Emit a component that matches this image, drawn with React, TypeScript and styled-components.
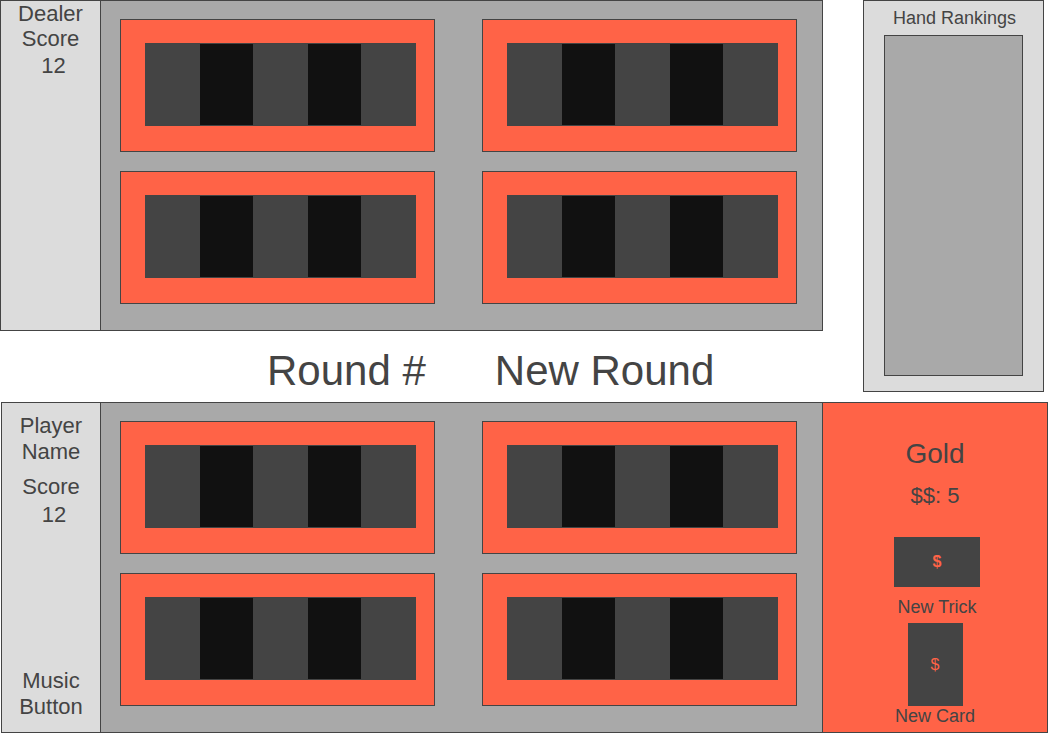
import React from "react";
import styled, { createGlobalStyle } from "styled-components";

const GlobalStyle = createGlobalStyle`
  html, body { margin: 0; padding: 0; background: #ffffff; }
  body { font-family: "Liberation Sans", Arial, sans-serif; color: #444444; }
  * { box-sizing: border-box; }
`;

const Page = styled.div`
  width: 1058px;
  height: 741px;
  overflow: hidden;
  display: flex;
  flex-direction: column;
`;

const TopArea = styled.div`
  display: flex;
  align-items: flex-start;
`;

const LeftColumn = styled.div`
  display: flex;
  flex-direction: column;
  width: 823px;
`;

const Table = styled.section<{ $width: number; $offset?: number }>`
  display: flex;
  width: ${(p) => p.$width}px;
  height: 331px;
  margin-left: ${(p) => p.$offset ?? 0}px;
  border: 1px solid #444444;
  flex-shrink: 0;
`;

const SidePanel = styled.div<{ $width: number; $padTop: number }>`
  width: ${(p) => p.$width}px;
  flex-shrink: 0;
  background: gainsboro;
  border-right: 1px solid #444444;
  display: flex;
  flex-direction: column;
  align-items: center;
  text-align: center;
  padding: ${(p) => p.$padTop}px 0 12px;
  font-size: 22px;
`;

const PanelTitle = styled.div<{ $lh: number }>`
  line-height: ${(p) => p.$lh}px;
  width: 80px;
`;

const PanelLine = styled.div<{ $mt: number }>`
  line-height: 26px;
  margin-top: ${(p) => p.$mt}px;
`;

const ScoreValue = styled.div<{ $lh: number }>`
  line-height: ${(p) => p.$lh}px;
  margin-top: 2px;
  padding-left: 6px;
`;

const Footer = styled.div`
  margin-top: auto;
  line-height: 26px;
  width: 80px;
`;

const Board = styled.div`
  width: 721px;
  flex-shrink: 0;
  background: darkgray;
  display: grid;
  grid-template-columns: repeat(2, 315px);
  grid-template-rows: repeat(2, 133px);
  column-gap: 47px;
  row-gap: 19px;
  padding: 18px 0 0 19px;
`;

const Hand = styled.div`
  border: 1px solid #444444;
  background: tomato;
  padding: 23px 0 0 24px;
  display: flex;
  align-items: flex-start;
`;

const Card = styled.div<{ $dark: boolean }>`
  width: 55px;
  height: 83px;
  flex-shrink: 0;
  border: 1px solid #444444;
  background: ${(p) => (p.$dark ? "#111111" : "#444444")};
  & + & {
    margin-left: -1px;
  }
`;

const MiddleRow = styled.div`
  height: 71px;
  display: flex;
  align-items: flex-start;
  padding: 16px 0 0 267px;
  gap: 69px;
  font-size: 42px;
  line-height: 48px;
`;

const Label = styled.div`
  white-space: nowrap;
`;

const Rankings = styled.aside`
  margin-left: 40px;
  width: 181px;
  height: 392px;
  flex-shrink: 0;
  border: 1px solid #444444;
  background: gainsboro;
  display: flex;
  flex-direction: column;
  align-items: center;
  padding-top: 7px;
`;

const RankingsTitle = styled.div`
  font-size: 18px;
  line-height: 21px;
  padding-left: 2px;
`;

const RankingsList = styled.div`
  margin-top: 6px;
  width: 139px;
  height: 341px;
  border: 1px solid #444444;
  background: darkgray;
`;

const Shop = styled.div`
  flex: 1;
  background: tomato;
  border-left: 1px solid #444444;
  display: flex;
  flex-direction: column;
  align-items: center;
  padding-top: 35px;
`;

const Gold = styled.div`
  font-size: 28px;
  line-height: 32px;
`;

const Money = styled.div`
  font-size: 22px;
  line-height: 25px;
  margin-top: 13px;
`;

const BuyButton = styled.div<{ $w: number; $h: number; $mt: number; $shift?: number; $bold?: boolean }>`
  width: ${(p) => p.$w}px;
  height: ${(p) => p.$h}px;
  margin-top: ${(p) => p.$mt}px;
  margin-left: ${(p) => p.$shift ?? 0}px;
  background: #444444;
  color: tomato;
  display: flex;
  align-items: center;
  justify-content: center;
  font-size: 16px;
  font-weight: ${(p) => (p.$bold ? 700 : 400)};
`;

const ButtonLabel = styled.div<{ $mt: number; $shift?: number }>`
  font-size: 18px;
  line-height: 21px;
  margin-top: ${(p) => p.$mt}px;
  margin-left: ${(p) => p.$shift ?? 0}px;
`;

const pattern = [false, true, false, true, false];

function HandRow() {
  return (
    <Hand>
      {pattern.map((d, i) => (
        <Card key={i} $dark={d} />
      ))}
    </Hand>
  );
}

function GameBoard() {
  return (
    <Board>
      <HandRow />
      <HandRow />
      <HandRow />
      <HandRow />
    </Board>
  );
}

export default function App() {
  return (
    <>
      <GlobalStyle />
      <Page>
        <TopArea>
          <LeftColumn>
            <Table $width={823}>
              <SidePanel $width={100} $padTop={0}>
                <PanelTitle $lh={25}>Dealer Score</PanelTitle>
                <ScoreValue $lh={25}>12</ScoreValue>
              </SidePanel>
              <GameBoard />
            </Table>
            <MiddleRow>
              <Label>Round #</Label>
              <Label>New Round</Label>
            </MiddleRow>
          </LeftColumn>
          <Rankings>
            <RankingsTitle>Hand Rankings</RankingsTitle>
            <RankingsList />
          </Rankings>
        </TopArea>
        <Table $width={1047} $offset={1}>
          <SidePanel $width={99} $padTop={10}>
            <PanelTitle $lh={26}>Player Name</PanelTitle>
            <PanelLine $mt={9}>Score</PanelLine>
            <ScoreValue $lh={26}>12</ScoreValue>
            <Footer>Music Button</Footer>
          </SidePanel>
          <GameBoard />
          <Shop>
            <Gold>Gold</Gold>
            <Money>$$: 5</Money>
            <BuyButton $w={86} $h={50} $mt={29} $shift={4} $bold>
              $
            </BuyButton>
            <ButtonLabel $mt={10} $shift={4}>
              New Trick
            </ButtonLabel>
            <BuyButton $w={55} $h={83} $mt={5}>
              $
            </BuyButton>
            <ButtonLabel $mt={0}>New Card</ButtonLabel>
          </Shop>
        </Table>
      </Page>
    </>
  );
}
